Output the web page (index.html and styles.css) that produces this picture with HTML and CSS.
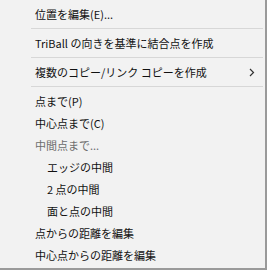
FILE: index.html
```html
<!DOCTYPE html>
<html lang="ja">
<head>
    <meta charset="UTF-8">
    <meta name="viewport" content="width=device-width, initial-scale=1.0">
    <title>メニュー</title>
    <link rel="stylesheet" href="styles.css">
</head>
<body>
    <div class="menu">
        <div class="item">位置を編集(E)...</div>
        <div class="sep"></div>
        <div class="item">TriBall の向きを基準に結合点を作成</div>
        <div class="sep"></div>
        <div class="item sub">
            <span>複数のコピー/リンク コピーを作成</span>
            <svg class="arrow" width="6" height="9" viewBox="0 0 6 9">
                <path d="M1 1 L4.5 4.5 L1 8" fill="none" stroke="#333" stroke-width="1.2"/>
            </svg>
        </div>
        <div class="sep"></div>
        <div class="item">点まで(P)</div>
        <div class="item">中心点まで(C)</div>
        <div class="item disabled">中間点まで...</div>
        <div class="item indent">エッジの中間</div>
        <div class="item indent">2 点の中間</div>
        <div class="item indent">面と点の中間</div>
        <div class="item">点からの距離を編集</div>
        <div class="item">中心点からの距離を編集</div>
    </div>
</body>
</html>
```

FILE: styles.css
```css
body {
    margin: 0;
    background-color: #ffffff;
}
.menu {
    width: 267px;
    height: 270px;
    box-sizing: border-box;
    padding-top: 3px;
    background-color: #f2f2f2;
    border-right: 2px solid #9a9a9a;
    border-bottom: 2px solid #9a9a9a;
    font-family: "Noto Sans CJK JP", "Noto Sans", sans-serif;
    font-size: 11px;
    color: #111111;
}
.item {
    height: 22px;
    line-height: 22px;
    padding-left: 35px;
    padding-right: 10px;
    white-space: nowrap;
}
.item.indent {
    padding-left: 47px;
}
.item.disabled {
    color: #6d6d6d;
}
.item.sub {
    display: flex;
    justify-content: space-between;
    align-items: center;
}
.sep {
    height: 1px;
    margin: 3px 2px 3px 31px;
    background-color: #d7d7d7;
}
```
